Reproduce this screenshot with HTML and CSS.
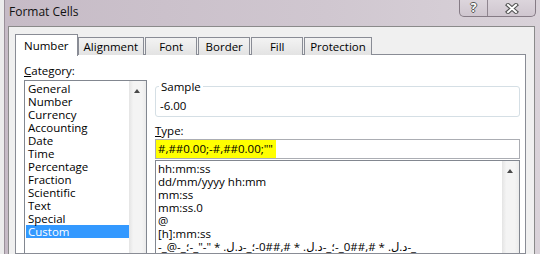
FILE: index.html
```html
<!DOCTYPE html>
<html>
<head>
<meta charset="utf-8">
<link rel="stylesheet" href="styles.css">
</head>
<body>
<div class="screen">
  <div class="excel-edge"></div>
  <div class="window">
    <div class="titlebar">
      <span class="title">Format Cells</span>
      <div class="caption">
        <span class="cbtn help">?</span>
        <span class="cbtn close">
          <svg width="14" height="11" viewBox="0 0 14 11"><path d="M3 2 L11 9 M11 2 L3 9" stroke="#555" stroke-width="4.2" stroke-linecap="square" fill="none"/><path d="M3 2 L11 9 M11 2 L3 9" stroke="#fff" stroke-width="2" stroke-linecap="square" fill="none"/></svg>
        </span>
      </div>
    </div>
    <div class="client">
      <div class="tabs">
        <div class="tab active">Number</div>
        <div class="tab">Alignment</div>
        <div class="tab">Font</div>
        <div class="tab">Border</div>
        <div class="tab">Fill</div>
        <div class="tab">Protection</div>
      </div>
      <div class="panel">
        <div class="col-left">
          <div class="label"><u>C</u>ategory:</div>
          <div class="listbox cat">
            <ul class="items">
              <li>General</li>
              <li>Number</li>
              <li>Currency</li>
              <li>Accounting</li>
              <li>Date</li>
              <li>Time</li>
              <li>Percentage</li>
              <li>Fraction</li>
              <li>Scientific</li>
              <li>Text</li>
              <li>Special</li>
              <li class="selected">Custom</li>
            </ul>
            <div class="scrollbar"><span class="arrow"></span></div>
          </div>
        </div>
        <div class="col-right">
          <fieldset class="sample">
            <legend>Sample</legend>
            <div class="sample-value">-6.00</div>
          </fieldset>
          <div class="label type-label"><u>T</u>ype:</div>
          <div class="textbox"><span class="hl">#,##0.00;-#,##0.00;""</span></div>
          <div class="listbox types">
            <ul class="items">
              <li>hh:mm:ss</li>
              <li>dd/mm/yyyy hh:mm</li>
              <li>mm:ss</li>
              <li>mm:ss.0</li>
              <li>@</li>
              <li>[h]:mm:ss</li>
              <li><bdo dir="ltr">-_@-_؛-_"-" * .ل.د-_؛-0##,# * .ل.د-_؛-_0##,# * .ل.د-_</bdo></li>
            </ul>
            <div class="scrollbar"><span class="arrow"></span></div>
          </div>
        </div>
      </div>
    </div>
  </div>
</div>
</body>
</html>
```

FILE: styles.css
```css
html, body {
  margin: 0;
  padding: 0;
}

body {
  width: 540px;
  height: 254px;
  overflow: hidden;
  font-family: "Segoe UI", "Open Sans", "DejaVu Sans", sans-serif;
  font-size: 11.5px;
  color: #000;
  background: #fff;
}

.screen {
  display: flex;
  height: 254px;
}

.excel-edge {
  width: 4px;
  background: #ececec;
}

.window {
  flex: 1;
  display: flex;
  flex-direction: column;
  border-left: 1px solid #9a909a;
  padding: 0 5px 0 3px;
  background: linear-gradient(to right, #c6bbc6, #d0c7d0 60%, #d9d2d9);
}

.titlebar {
  height: 26px;
  display: flex;
  align-items: flex-start;
}

.title {
  padding: 4px 0 0 1px;
  line-height: 15px;
  font-size: 12px;
  color: #111;
}

.caption {
  margin-left: auto;
  margin-right: -1px;
  display: flex;
  height: 16px;
  border: 1px solid #857b85;
  border-top: none;
  border-radius: 0 0 5px 5px;
  background: linear-gradient(#dcd5dc, #cfc6cf);
  overflow: hidden;
}

.cbtn {
  display: flex;
  align-items: center;
  justify-content: center;
  height: 16px;
}

.help {
  width: 27px;
  border-right: 1px solid #8f858f;
  color: #fff;
  font-weight: bold;
  font-size: 12px;
  line-height: 16px;
  text-shadow: 1px 0 0 #555, -1px 0 0 #555, 0 1px 0 #555, 0 -1px 0 #555;
}

.close {
  width: 47px;
}

.client {
  flex: 1;
  display: flex;
  flex-direction: column;
  border: 1px solid #8a8a8a;
  border-bottom: none;
  background: #f0f0f0;
  padding: 7px 8px 0 6px;
}

.tabs {
  display: flex;
  align-items: flex-end;
  height: 21px;
  position: relative;
  z-index: 1;
  margin-bottom: -1px;
}

.tab {
  height: 18px;
  line-height: 18px;
  padding: 0 5px;
  min-width: 52px;
  text-align: center;
  border: 1px solid #898c95;
  border-bottom: none;
  background: linear-gradient(#f3f3f3, #e3e3e3);
  box-sizing: border-box;
}

.tab + .tab {
  margin-left: 1px;
}

.tab.active {
  height: 22px;
  line-height: 22px;
  padding: 0 8px;
  background: #fff;
  margin-bottom: -1px;
}

.tab.active + .tab {
  margin-left: 0;
}

.panel {
  flex: 1;
  display: flex;
  gap: 8px;
  border: 1px solid #898c95;
  background: #fff;
  padding: 8px 5px 0 8px;
}

.col-left {
  width: 123px;
  display: flex;
  flex-direction: column;
}

.col-right {
  flex: 1;
  display: flex;
  flex-direction: column;
}

.label {
  line-height: 15px;
}

.listbox {
  flex: 1;
  display: flex;
  border: 1px solid #828790;
  border-bottom: none;
  background: #fff;
}

.cat {
  margin-top: 2px;
  padding-left: 1px;
}

.items {
  flex: 1;
  list-style: none;
  margin: 0;
  padding: 1px 0 0 0;
}

.items li {
  line-height: 13px;
  height: 13px;
  padding-left: 2px;
  white-space: nowrap;
}

.items li.selected {
  background: #3399ff;
  color: #fff;
}

.types .items {
  padding-left: 2px;
}

.types .items li {
  padding-left: 0;
}

.scrollbar {
  width: 17px;
  position: relative;
  background: linear-gradient(to right, #e4e4e4, #f4f4f4 25%, #f4f4f4 75%, #ebebeb);
}

.arrow {
  position: absolute;
  left: 5px;
  top: 8px;
  width: 0;
  height: 0;
  border-left: 3.5px solid transparent;
  border-right: 3.5px solid transparent;
  border-bottom: 4px solid #4a4a4a;
}

.sample {
  margin: 16px 0 0 0;
  padding: 4px 4px 3px 4px;
  border: 1px solid #d5dfe5;
  border-radius: 3px;
  min-width: 0;
}

.sample legend {
  padding: 0 2px;
  line-height: 15px;
  margin-left: -1px;
}

.sample-value {
  line-height: 15px;
}

.type-label {
  margin-top: 6px;
}

.textbox {
  height: 18px;
  margin-top: 1px;
  border: 1px solid #abadb3;
  display: flex;
}

.hl {
  background: #ffff00;
  line-height: 18px;
  padding: 0 3px 0 2px;
}

.types {
  margin-top: 1px;
}
```
